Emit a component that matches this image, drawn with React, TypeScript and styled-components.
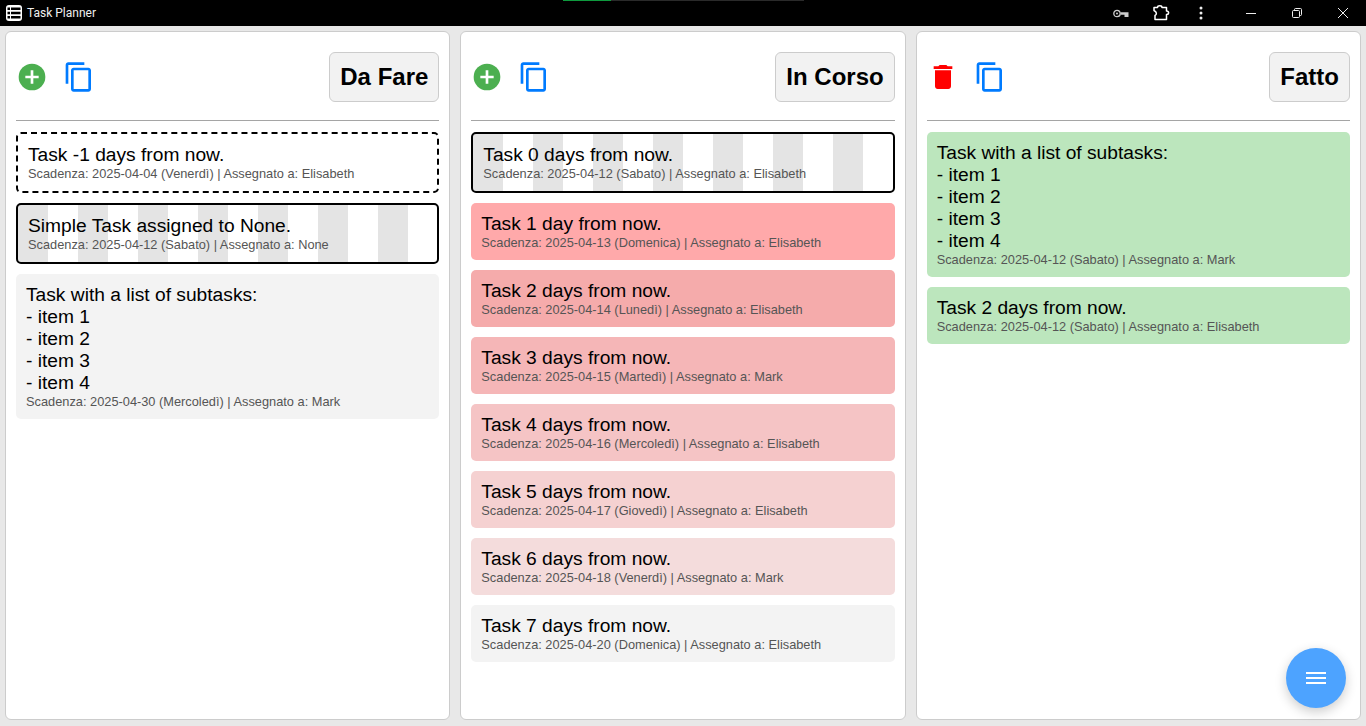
import React from "react";
import styled, { createGlobalStyle } from "styled-components";

const Global = createGlobalStyle`
  html, body { margin: 0; padding: 0; height: 100%; background: #e8e8e8; overflow: hidden; }
  #root { height: 100%; }
  * { box-sizing: border-box; }
`;

const Shell = styled.div`
  display: flex;
  flex-direction: column;
  height: 726px;
  font-family: "Liberation Sans", Arial, sans-serif;
`;

const TitleBar = styled.header`
  position: relative;
  display: flex;
  align-items: center;
  flex: 0 0 26px;
  height: 26px;
  background: #000;
  color: #fff;
  padding-left: 6px;
`;

const AppName = styled.span`
  margin-left: 5px;
  font-family: Roboto, "Open Sans", sans-serif;
  font-size: 12px;
  color: #f0f0f0;
`;

const Progress = styled.div`
  position: absolute;
  top: 0;
  left: 563px;
  width: 241px;
  height: 1px;
  background: #2a2a2a;
`;

const ProgressFill = styled.div`
  width: 48px;
  height: 1px;
  background: #0e9a3e;
`;

const BarActions = styled.div`
  display: flex;
  align-items: center;
  margin-left: auto;
  height: 26px;
`;

const WindowControls = styled.div`
  display: flex;
  align-items: center;
  margin-left: 12px;
`;

const BarIcon = styled.span<{ $w: number }>`
  display: flex;
  align-items: center;
  justify-content: center;
  width: ${(p) => p.$w}px;
  height: 26px;
`;

const Board = styled.main`
  flex: 1;
  display: grid;
  grid-template-columns: repeat(3, 1fr);
  gap: 10px;
  padding: 5px 5px 6px;
  min-height: 0;
`;

const Column = styled.section`
  display: flex;
  flex-direction: column;
  background: #fff;
  border: 1px solid #ccc;
  border-radius: 6px;
  padding: 20px 10px 10px;
  min-width: 0;
`;

const ColumnHeader = styled.div`
  display: flex;
  align-items: center;
  gap: 15px;
  height: 50px;
  margin-bottom: 18px;
`;

const IconButton = styled.span`
  display: flex;
  width: 32px;
  height: 32px;
`;

const StatusButton = styled.div`
  display: flex;
  align-items: center;
  height: 50px;
  margin-left: auto;
  padding: 0 10px;
  background: #f2f2f2;
  border: 1px solid #ccc;
  border-radius: 6px;
  font-size: 24px;
  font-weight: 700;
  color: #000;
`;

const Divider = styled.hr`
  margin: 0 0 11px;
  border: 0;
  height: 1px;
  background: #a5a5a5;
`;

const CardList = styled.div`
  display: flex;
  flex-direction: column;
  gap: 10px;
`;

const stripes = "repeating-linear-gradient(90deg, #e4e4e4 0 30px, #fff 30px 60px)";

const Card = styled.article<{ $bg?: string; $outline?: "dashed" | "striped" }>`
  padding: 10px;
  border-radius: 5px;
  background: ${(p) => (p.$outline === "striped" ? stripes : p.$bg ?? "#fff")};
  border: ${(p) => (p.$outline ? `2px ${p.$outline === "dashed" ? "dashed" : "solid"} #000` : "0")};
`;

const CardTitle = styled.div`
  font-size: 19.2px;
  line-height: 22px;
  color: #000;
  white-space: pre-line;
`;

const CardMeta = styled.div`
  font-size: 12.8px;
  line-height: 15px;
  color: #555;
`;

const Fab = styled.button`
  position: absolute;
  left: 1286px;
  top: 648px;
  display: flex;
  align-items: center;
  justify-content: center;
  width: 60px;
  height: 60px;
  padding: 0;
  border: 0;
  border-radius: 50%;
  background: #4da3ff;
  box-shadow: 0 4px 12px rgba(0, 0, 0, 0.2);
`;

const AddIcon = () => (
  <svg width="32" height="32" viewBox="0 0 24 24">
    <circle cx="12" cy="12" r="10" fill="#4caf50" />
    <path d="M17 13h-4v4h-2v-4H7v-2h4V7h2v4h4v2z" fill="#fff" />
  </svg>
);

const CopyIcon = () => (
  <svg width="32" height="32" viewBox="0 0 24 24" fill="#007bff">
    <path d="M16 1H4c-1.1 0-2 .9-2 2v14h2V3h12V1zm3 4H8c-1.1 0-2 .9-2 2v14c0 1.1.9 2 2 2h11c1.1 0 2-.9 2-2V7c0-1.1-.9-2-2-2zm0 16H8V7h11v14z" />
  </svg>
);

const TrashIcon = () => (
  <svg width="32" height="32" viewBox="0 0 24 24" fill="#f00">
    <path d="M6 19c0 1.1.9 2 2 2h8c1.1 0 2-.9 2-2V7H6v12zM19 4h-3.500l-1-1h-5l-1 1H5v2h14V4z" />
  </svg>
);

const AppIcon = () => (
  <svg width="16" height="16" viewBox="0 0 16 16">
    <rect x="0" y="0" width="16" height="16" rx="3" fill="#fff" />
    <path
      d="M1.500 2.500h2.500v2.500h-2.500zM5 2.500h9.500v2.500H5zM1.500 6.800h2.500v2.500h-2.500zM5 6.800h9.500v2.500H5zM1.500 11h2.500v2.500h-2.500zM5 11h9.500v2.500H5z"
      fill="#000"
    />
  </svg>
);

const KeyIcon = () => (
  <svg width="16" height="9" viewBox="0 0 16 9">
    <circle cx="4" cy="4.500" r="3.200" fill="none" stroke="#ccc" strokeWidth="1.300" />
    <circle cx="4" cy="4.500" r="1" fill="#ccc" />
    <path d="M7.500 3.300H15.500V8H11.500V5.800H7.500Z" fill="#ccc" />
  </svg>
);

const PuzzleIcon = () => (
  <svg width="17" height="16" viewBox="0 0 17 16" fill="none" stroke="#fff" strokeWidth="1.500" strokeLinejoin="round">
    <path d="M1 2.500H4.500C4.500 0.200 9 0.200 9 2.500H13.500V6C16.300 6 16.300 9.500 13.500 9.500V14.500H2V10.500C4 9.500 4 7 1 5.500Z" />
  </svg>
);

const DotsIcon = () => (
  <svg width="4" height="14" viewBox="0 0 4 14" fill="#eee">
    <circle cx="2" cy="2" r="1.500" />
    <circle cx="2" cy="7" r="1.500" />
    <circle cx="2" cy="12" r="1.500" />
  </svg>
);

const MinimizeIcon = () => (
  <svg width="10" height="10" viewBox="0 0 10 10" stroke="#eee" strokeWidth="1">
    <path d="M0 5.500h10" />
  </svg>
);

const RestoreIcon = () => (
  <svg width="10" height="10" viewBox="0 0 10 10" fill="none" stroke="#eee" strokeWidth="1">
    <rect x="0.500" y="2.500" width="7" height="7" rx="1" />
    <path d="M2.500 2.500V1.500a1 1 0 0 1 1-1h5a1 1 0 0 1 1 1v5a1 1 0 0 1-1 1h-1" />
  </svg>
);

const CloseIcon = () => (
  <svg width="10" height="10" viewBox="0 0 10 10" stroke="#eee" strokeWidth="1">
    <path d="M0 0l10 10M10 0L0 10" />
  </svg>
);

const MenuIcon = () => (
  <svg width="20" height="14" viewBox="0 0 20 14" fill="#fff">
    <rect y="1" width="20" height="2" />
    <rect y="6" width="20" height="2" />
    <rect y="11" width="20" height="2" />
  </svg>
);

type Task = {
  title: string;
  date: string;
  who: string;
  bg?: string;
  outline?: "dashed" | "striped";
};

type Col = { name: string; lead: "add" | "trash"; tasks: Task[] };

const subtasks = "Task with a list of subtasks:\n- item 1\n- item 2\n- item 3\n- item 4";

const columns: Col[] = [
  {
    name: "Da Fare",
    lead: "add",
    tasks: [
      { title: "Task -1 days from now.", date: "2025-04-04 (Venerdì)", who: "Elisabeth", outline: "dashed" },
      { title: "Simple Task assigned to None.", date: "2025-04-12 (Sabato)", who: "None", outline: "striped" },
      { title: subtasks, date: "2025-04-30 (Mercoledì)", who: "Mark", bg: "#f3f3f3" },
    ],
  },
  {
    name: "In Corso",
    lead: "add",
    tasks: [
      { title: "Task 0 days from now.", date: "2025-04-12 (Sabato)", who: "Elisabeth", outline: "striped" },
      { title: "Task 1 day from now.", date: "2025-04-13 (Domenica)", who: "Elisabeth", bg: "#ffa9aa" },
      { title: "Task 2 days from now.", date: "2025-04-14 (Lunedì)", who: "Elisabeth", bg: "#f5abab" },
      { title: "Task 3 days from now.", date: "2025-04-15 (Martedì)", who: "Mark", bg: "#f5b6b7" },
      { title: "Task 4 days from now.", date: "2025-04-16 (Mercoledì)", who: "Elisabeth", bg: "#f5c4c5" },
      { title: "Task 5 days from now.", date: "2025-04-17 (Giovedì)", who: "Elisabeth", bg: "#f5d1d1" },
      { title: "Task 6 days from now.", date: "2025-04-18 (Venerdì)", who: "Mark", bg: "#f4dcdc" },
      { title: "Task 7 days from now.", date: "2025-04-20 (Domenica)", who: "Elisabeth", bg: "#f3f3f3" },
    ],
  },
  {
    name: "Fatto",
    lead: "trash",
    tasks: [
      { title: subtasks, date: "2025-04-12 (Sabato)", who: "Mark", bg: "#bce6bd" },
      { title: "Task 2 days from now.", date: "2025-04-12 (Sabato)", who: "Elisabeth", bg: "#bce6bd" },
    ],
  },
];

export default function App() {
  return (
    <Shell>
      <Global />
      <TitleBar>
        <AppIcon />
        <AppName>Task Planner</AppName>
        <Progress>
          <ProgressFill />
        </Progress>
        <BarActions>
          <BarIcon $w={32}><KeyIcon /></BarIcon>
          <BarIcon $w={49}><PuzzleIcon /></BarIcon>
          <BarIcon $w={30}><DotsIcon /></BarIcon>
          <WindowControls>
            <BarIcon $w={46}><MinimizeIcon /></BarIcon>
            <BarIcon $w={46}><RestoreIcon /></BarIcon>
            <BarIcon $w={46}><CloseIcon /></BarIcon>
          </WindowControls>
        </BarActions>
      </TitleBar>
      <Board>
        {columns.map((col) => (
          <Column key={col.name}>
            <ColumnHeader>
              <IconButton>{col.lead === "add" ? <AddIcon /> : <TrashIcon />}</IconButton>
              <IconButton><CopyIcon /></IconButton>
              <StatusButton>{col.name}</StatusButton>
            </ColumnHeader>
            <Divider />
            <CardList>
              {col.tasks.map((t) => (
                <Card key={t.title + t.date} $bg={t.bg} $outline={t.outline}>
                  <CardTitle>{t.title}</CardTitle>
                  <CardMeta>Scadenza: {t.date} | Assegnato a: {t.who}</CardMeta>
                </Card>
              ))}
            </CardList>
          </Column>
        ))}
      </Board>
      <Fab aria-label="Menu"><MenuIcon /></Fab>
    </Shell>
  );
}
